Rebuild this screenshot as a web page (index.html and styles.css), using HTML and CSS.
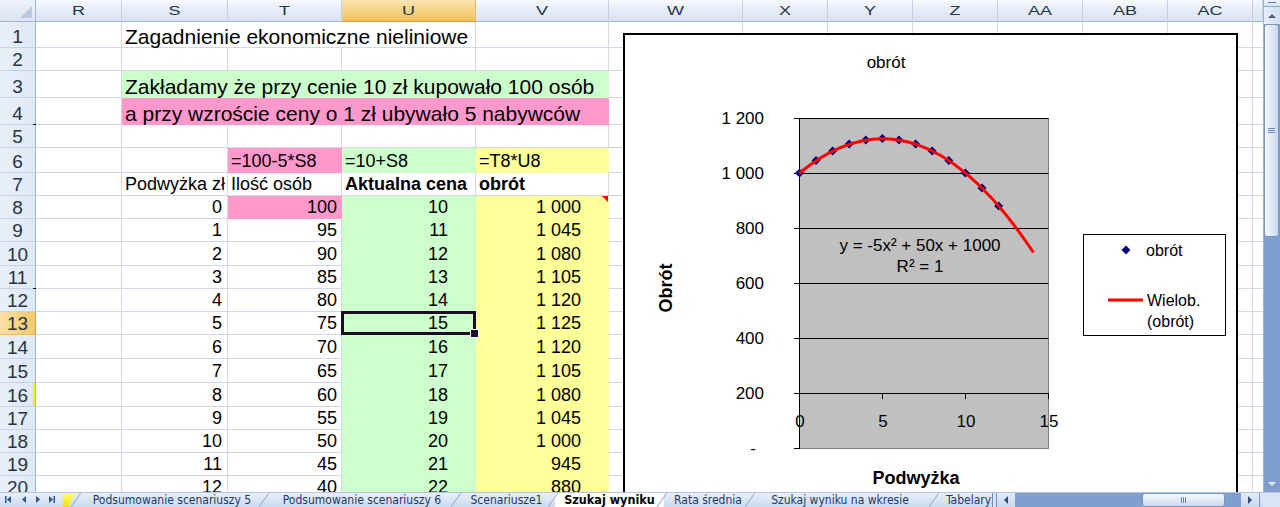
FILE: index.html
```html
<!DOCTYPE html>
<html lang="pl">
<head>
<meta charset="utf-8">
<title>Szukaj wyniku</title>
<link rel="stylesheet" href="styles.css">
</head>
<body>
<div class="app">
  <div class="main">
    <div class="sheet">
      <!-- column headers -->
      <div class="ch corner"></div>
      <div class="ch"><span>R</span></div>
      <div class="ch"><span>S</span></div>
      <div class="ch"><span>T</span></div>
      <div class="ch sel"><span>U</span></div>
      <div class="ch"><span>V</span></div>
      <div class="ch"><span>W</span></div>
      <div class="ch"><span>X</span></div>
      <div class="ch"><span>Y</span></div>
      <div class="ch"><span>Z</span></div>
      <div class="ch"><span>AA</span></div>
      <div class="ch"><span>AB</span></div>
      <div class="ch"><span>AC</span></div>
      <div class="ch"></div>

      <!-- row 1 -->
      <div class="rh">1</div><div class="c"></div>
      <div class="c big span3">Zagadnienie ekonomiczne nieliniowe</div>
      <div class="c"></div><div class="rest"></div>
      <!-- row 2 -->
      <div class="rh">2</div><div class="c"></div><div class="c"></div><div class="c"></div><div class="c"></div><div class="c"></div><div class="rest"></div>
      <!-- row 3 -->
      <div class="rh">3</div><div class="c"></div>
      <div class="c big span4 green">Zakładamy że przy cenie 10 zł kupowało 100 osób</div>
      <div class="rest"></div>
      <!-- row 4 -->
      <div class="rh mark-b">4</div><div class="c"></div>
      <div class="c big span4 pink">a przy wzroście ceny o 1 zł ubywało 5 nabywców</div>
      <div class="rest"></div>
      <!-- row 5 -->
      <div class="rh">5</div><div class="c"></div><div class="c"></div><div class="c"></div><div class="c"></div><div class="c"></div><div class="rest"></div>
      <!-- row 6 -->
      <div class="rh">6</div><div class="c"></div><div class="c"></div>
      <div class="c pink">=100-5*S8</div>
      <div class="c green">=10+S8</div>
      <div class="c yellow">=T8*U8</div>
      <div class="rest"></div>
      <!-- row 7 -->
      <div class="rh">7</div><div class="c"></div>
      <div class="c">Podwyżka zł</div>
      <div class="c">Ilość osób</div>
      <div class="c bold">Aktualna cena</div>
      <div class="c bold">obrót</div>
      <div class="rest"></div>
      <!-- row 8 -->
      <div class="rh">8</div><div class="c"></div>
      <div class="c ns">0</div><div class="c nt pink">100</div><div class="c nu green">10</div><div class="c nv yellow comment">1 000</div>
      <div class="rest"></div>
      <!-- row 9 -->
      <div class="rh">9</div><div class="c"></div>
      <div class="c ns">1</div><div class="c nt">95</div><div class="c nu green">11</div><div class="c nv yellow">1 045</div>
      <div class="rest"></div>
      <!-- row 10 -->
      <div class="rh">10</div><div class="c"></div>
      <div class="c ns">2</div><div class="c nt">90</div><div class="c nu green">12</div><div class="c nv yellow">1 080</div>
      <div class="rest"></div>
      <!-- row 11 -->
      <div class="rh mark-b">11</div><div class="c"></div>
      <div class="c ns">3</div><div class="c nt">85</div><div class="c nu green">13</div><div class="c nv yellow">1 105</div>
      <div class="rest"></div>
      <!-- row 12 -->
      <div class="rh">12</div><div class="c"></div>
      <div class="c ns">4</div><div class="c nt">80</div><div class="c nu green">14</div><div class="c nv yellow">1 120</div>
      <div class="rest"></div>
      <!-- row 13 -->
      <div class="rh sel">13</div><div class="c"></div>
      <div class="c ns">5</div><div class="c nt">75</div><div class="c nu green selected">15</div><div class="c nv yellow">1 125</div>
      <div class="rest"></div>
      <!-- row 14 -->
      <div class="rh">14</div><div class="c"></div>
      <div class="c ns">6</div><div class="c nt">70</div><div class="c nu green">16</div><div class="c nv yellow">1 120</div>
      <div class="rest"></div>
      <!-- row 15 -->
      <div class="rh">15</div><div class="c"></div>
      <div class="c ns">7</div><div class="c nt">65</div><div class="c nu green">17</div><div class="c nv yellow">1 105</div>
      <div class="rest"></div>
      <!-- row 16 -->
      <div class="rh mark-y">16</div><div class="c"></div>
      <div class="c ns">8</div><div class="c nt">60</div><div class="c nu green">18</div><div class="c nv yellow">1 080</div>
      <div class="rest"></div>
      <!-- row 17 -->
      <div class="rh">17</div><div class="c"></div>
      <div class="c ns">9</div><div class="c nt">55</div><div class="c nu green">19</div><div class="c nv yellow">1 045</div>
      <div class="rest"></div>
      <!-- row 18 -->
      <div class="rh">18</div><div class="c"></div>
      <div class="c ns">10</div><div class="c nt">50</div><div class="c nu green">20</div><div class="c nv yellow">1 000</div>
      <div class="rest"></div>
      <!-- row 19 -->
      <div class="rh">19</div><div class="c"></div>
      <div class="c ns">11</div><div class="c nt">45</div><div class="c nu green">21</div><div class="c nv yellow">945</div>
      <div class="rest"></div>
      <!-- row 20 -->
      <div class="rh">20</div><div class="c"></div>
      <div class="c ns">12</div><div class="c nt">40</div><div class="c nu green">22</div><div class="c nv yellow">880</div>
      <div class="rest"></div>

      <!-- embedded chart object -->
      <div class="chart">
        <svg width="611" height="470" viewBox="0 0 611 470" class="chart-svg">
          <defs>
            <path id="dia" d="M0 -4.5L4.5 0L0 4.5L-4.5 0Z" fill="#000080"/>
          </defs>
          <text x="261" y="33" class="t-title" text-anchor="middle">obrót</text>
          <rect x="174.5" y="83.5" width="249" height="330" fill="#c0c0c0" stroke="#808080"/>
          <path d="M169 83.5H423.5M169 138.5H423.5M169 193.5H423.5M169 248.5H423.5M169 303.5H423.5M169 358.5H423.5M169 413.5H174.5" stroke="#000" fill="none"/>
          <path d="M174.5 83V414M257.5 358V364M340.5 358V364M423.5 358V364" stroke="#000" fill="none"/>
          <g class="t-axis" text-anchor="end">
            <text x="139" y="89">1 200</text>
            <text x="139" y="144">1 000</text>
            <text x="139" y="199">800</text>
            <text x="139" y="254">600</text>
            <text x="139" y="309">400</text>
            <text x="139" y="364">200</text>
            <text x="131" y="419">-</text>
          </g>
          <g class="t-axis" text-anchor="middle">
            <text x="175" y="392">0</text>
            <text x="258" y="392">5</text>
            <text x="341" y="392">10</text>
            <text x="424" y="392">15</text>
          </g>
          <g>
            <use href="#dia" x="174.5" y="138"/>
            <use href="#dia" x="191" y="125.6"/>
            <use href="#dia" x="207.6" y="116"/>
            <use href="#dia" x="224.2" y="109.1"/>
            <use href="#dia" x="240.8" y="105"/>
            <use href="#dia" x="257.4" y="103.6"/>
            <use href="#dia" x="274" y="105"/>
            <use href="#dia" x="290.6" y="109.1"/>
            <use href="#dia" x="307.2" y="116"/>
            <use href="#dia" x="323.8" y="125.6"/>
            <use href="#dia" x="340.4" y="138"/>
            <use href="#dia" x="357" y="153.1"/>
            <use href="#dia" x="373.6" y="171"/>
          </g>
          <path d="M174.5 138Q291.5 41.1 408.5 217.5" stroke="#ff0000" stroke-width="3" fill="none"/>
          <text x="295" y="216" class="t-axis" text-anchor="middle">y = -5x² + 50x + 1000</text>
          <text x="295" y="237" class="t-axis" text-anchor="middle">R² = 1</text>
          <text transform="translate(47 253) rotate(-90)" class="t-bold" text-anchor="middle">Obrót</text>
          <text x="291" y="449" class="t-bold" text-anchor="middle">Podwyżka</text>
          <rect x="458.5" y="199.5" width="142" height="101" fill="#fff" stroke="#000"/>
          <use href="#dia" x="501" y="215"/>
          <text x="521" y="221" class="t-leg">obrót</text>
          <path d="M483 265H518" stroke="#ff0000" stroke-width="3"/>
          <text x="522" y="271" class="t-leg">Wielob.</text>
          <text x="522" y="292" class="t-leg">(obrót)</text>
        </svg>
      </div>
    </div>

    <div class="vscroll">
      <div class="vs-split"></div>
      <div class="vs-btn"><i class="arr-up"></i></div>
      <div class="vs-thumb"><i class="grip-h"></i></div>
      <div class="vs-track"></div>
      <div class="vs-btn dark"><i class="arr-down"></i></div>
    </div>
  </div>

  <div class="tabs">
    <div class="nav">
      <svg width="60" height="15" viewBox="0 0 60 15">
        <g fill="#2b5597">
          <rect x="5" y="4" width="1.5" height="7"/>
          <path d="M11 4L7 7.5L11 11Z"/>
          <path d="M26 4L22 7.5L26 11Z"/>
          <path d="M36 4L40 7.5L36 11Z"/>
          <path d="M49 4L53 7.5L49 11Z"/>
          <rect x="53.5" y="4" width="1.5" height="7"/>
        </g>
      </svg>
    </div>
    <div class="tab yel"></div>
    <div class="tab w188">Podsumowanie scenariuszy 5</div>
    <div class="tab w192">Podsumowanie scenariuszy 6</div>
    <div class="tab w97">Scenariusze1</div>
    <div class="tab active">Szukaj wyniku</div>
    <div class="tab w88">Rata średnia</div>
    <div class="tab w176">Szukaj wyniku na wkresie</div>
    <div class="tab w64 cut">Tabelaryzacja</div>
    <div class="hscroll">
      <div class="hs-split"></div>
      <div class="hs-btn"><i class="arr-left"></i></div>
      <div class="hs-track"></div>
      <div class="hs-thumb"><i class="grip-v"></i></div>
      <div class="hs-track2"></div>
      <div class="hs-btn"><i class="arr-right"></i></div>
      <div class="hs-end"></div>
    </div>
    <div class="corner-box"></div>
  </div>
</div>
</body>
</html>
```

FILE: styles.css
```css
* { box-sizing: border-box; }

html, body {
  margin: 0;
  padding: 0;
  background: #fff;
  overflow: hidden;
}

body {
  font-family: "Liberation Sans", Arial, sans-serif;
  color: #000;
}

.app {
  width: 1280px;
  height: 507px;
  display: flex;
  flex-direction: column;
  overflow: hidden;
}

.main {
  display: flex;
  height: 492px;
  flex: none;
  overflow: hidden;
}

/* ---------- sheet grid ---------- */
.sheet {
  position: relative;
  width: 1263px;
  height: 492px;
  overflow: hidden;
  display: grid;
  grid-template-columns: 36px 86px 106px 114px 134px 133px 134px repeat(6, 85px) 10px;
  grid-template-rows: 22px 26px 23px 27px 27px 23px 25px 23px 23px 23px 24px 23px 23px 23px 24px 24px 24px 23px 23px 23px 23px;
}

.ch {
  background: linear-gradient(#f8fafd 0%, #e6edf7 45%, #d9e3f1 100%);
  border-right: 1px solid #c3d1e4;
  border-bottom: 1px solid #9eb6ce;
  display: flex;
  align-items: center;
  justify-content: center;
  font-size: 18px;
  color: #233447;
}
.ch span {
  display: inline-block;
  transform: scaleY(0.74);
}
.ch.sel {
  background: linear-gradient(#fbe2ad 0%, #f8d58a 45%, #f1c15f 100%);
  border-bottom-color: #f29536;
  border-right-color: #f2b75b;
}
.ch.corner {
  position: relative;
  background: linear-gradient(#eef3fa, #dbe4f1);
  border-right-color: #9eb6ce;
}
.ch.corner::after {
  content: "";
  position: absolute;
  right: 3px;
  bottom: 3px;
  border-left: 12px solid transparent;
  border-bottom: 12px solid #b9c9de;
}

.rh {
  background: linear-gradient(to right, #eaf0f9, #dfe8f5);
  border-right: 1px solid #9eb6ce;
  border-bottom: 1px solid #c5d3e6;
  display: flex;
  align-items: flex-end;
  justify-content: center;
  font-size: 19px;
  line-height: 1;
  padding-bottom: 1px;
  color: #233447;
}
.rh.sel {
  background: linear-gradient(to right, #fbe0a6, #f4c868);
  border-right-color: #f29536;
  border-bottom-color: #f2b75b;
}
.rh.mark-y { box-shadow: inset -2px 0 0 #f5f000; }
.rh.mark-b { position: relative; }
.rh.mark-b::after {
  content: "";
  position: absolute;
  right: -1px;
  bottom: -1px;
  width: 3px;
  height: 1px;
  background: #000;
}

.c {
  border-right: 1px solid #d0d7e5;
  border-bottom: 1px solid #d0d7e5;
  display: flex;
  align-items: flex-end;
  font-size: 18px;
  line-height: 1.15;
  padding: 0 3px 0 3px;
  white-space: nowrap;
  min-width: 0;
}

.rest {
  grid-column: span 8;
  border-bottom: 1px solid #d0d7e5;
  background-image: repeating-linear-gradient(to right, transparent 0 84px, #d0d7e5 84px 85px);
  background-size: 595px 100%;
  background-repeat: no-repeat;
  background-position: 49px 0;
}

.big { font-size: 21px; line-height: 0.9; }
.span3 { grid-column: span 3; }
.span4 { grid-column: span 4; }
.bold { font-weight: bold; }

.green { background: #ccffcc; border-color: #ccffcc; }
.pink { background: #ff99cc; border-color: #ff99cc; }
.yellow { background: #ffff99; border-color: #ffff99; }

.ns { justify-content: flex-end; padding-right: 5px; }
.nt { justify-content: flex-end; padding-right: 4px; }
.nu { justify-content: flex-end; padding-right: 27px; }
.nv { justify-content: flex-end; padding-right: 27px; }

.comment { position: relative; }
.comment::after {
  content: "";
  position: absolute;
  top: 0;
  right: 0;
  border-top: 6px solid #ff0000;
  border-left: 6px solid transparent;
}

.selected {
  position: relative;
  z-index: 1;
}
.selected::before {
  content: "";
  position: absolute;
  left: -1px;
  top: -1px;
  right: -1px;
  bottom: -1px;
  border: 3px solid #1f0a26;
}
.selected::after {
  content: "";
  position: absolute;
  right: -4px;
  bottom: -4px;
  width: 7px;
  height: 7px;
  background: #1f0a26;
  border: 1px solid #fff;
}

/* ---------- chart ---------- */
.chart {
  position: absolute;
  left: 623px;
  top: 33px;
  width: 615px;
  height: 474px;
  border: 2px solid #000;
  background: #fff;
  z-index: 2;
}
.chart-svg {
  display: block;
  font-family: "Liberation Sans", Arial, sans-serif;
}
.t-title { font-size: 17px; }
.t-axis { font-size: 17px; }
.t-bold { font-size: 18px; font-weight: bold; }
.t-leg { font-size: 16px; }

/* ---------- vertical scrollbar ---------- */
.vscroll {
  width: 17px;
  height: 492px;
  display: flex;
  flex-direction: column;
  background: #819fce;
  border-left: 1px solid #9eb6ce;
}
.vs-split {
  height: 7px;
  flex: none;
  background: linear-gradient(#eef3fa, #d6e2f2);
  border-bottom: 1px solid #8ba3c7;
  position: relative;
}
.vs-split::after {
  content: "";
  position: absolute;
  left: 4px;
  right: 4px;
  top: 2px;
  height: 1px;
  background: #5e7aa6;
}
.vs-btn {
  height: 17px;
  flex: none;
  display: flex;
  align-items: center;
  justify-content: center;
  background: linear-gradient(to right, #eaf0f8, #d3dff0);
}
.vs-btn.dark { background: #819fce; }
.vs-thumb {
  height: 213px;
  flex: none;
  margin: 0 1px 0 0;
  border: 1px solid #7b96c0;
  border-radius: 3px;
  background: linear-gradient(to right, #f6f9fd, #e1e9f6 50%, #c9d7ed);
  display: flex;
  align-items: center;
  justify-content: center;
}
.vs-track { flex: 1; }

.arr-up {
  width: 0; height: 0;
  border-left: 4px solid transparent;
  border-right: 4px solid transparent;
  border-bottom: 4px solid #4a5f80;
}
.arr-down {
  width: 0; height: 0;
  border-left: 4px solid transparent;
  border-right: 4px solid transparent;
  border-top: 4px solid #dfe8f5;
}
.arr-left {
  width: 0; height: 0;
  border-top: 4px solid transparent;
  border-bottom: 4px solid transparent;
  border-right: 4px solid #2f4f80;
}
.arr-right {
  width: 0; height: 0;
  border-top: 4px solid transparent;
  border-bottom: 4px solid transparent;
  border-left: 4px solid #2f4f80;
}
.grip-h {
  width: 7px;
  height: 5px;
  border-top: 1px solid #6d88b4;
  border-bottom: 1px solid #6d88b4;
  position: relative;
}
.grip-h::after {
  content: "";
  position: absolute;
  left: 0; right: 0; top: 1px;
  height: 1px;
  background: #6d88b4;
}
.grip-v {
  width: 5px;
  height: 6px;
  border-left: 1px solid #6d88b4;
  border-right: 1px solid #6d88b4;
  position: relative;
}
.grip-v::after {
  content: "";
  position: absolute;
  top: 0; bottom: 0; left: 1px;
  width: 1px;
  background: #6d88b4;
}

/* ---------- sheet tabs ---------- */
.tabs {
  height: 15px;
  flex: none;
  display: flex;
  background: linear-gradient(#e8eff9, #ccdbef);
  border-top: 1px solid #b5c7df;
  font-family: "DejaVu Sans Condensed", "DejaVu Sans", sans-serif;
  font-stretch: condensed;
  font-size: 12px;
  letter-spacing: 0;
  line-height: 14px;
  color: #1b3a66;
}
.nav {
  width: 60px;
  flex: none;
}
.nav svg { display: block; margin-top: -1px; }

.tab {
  position: relative;
  flex: none;
  text-align: center;
  white-space: nowrap;
  overflow: visible;
}
.tab::before {
  content: "";
  position: absolute;
  left: -3px;
  top: -2px;
  width: 1px;
  height: 19px;
  background: #9ab0d0;
  transform: rotate(35deg);
}
.tab.yel {
  width: 18px;
  background: linear-gradient(#fffc7a, #f2e400);
  clip-path: polygon(15% 0, 85% 0, 45% 100%, 15% 100%);
}
.tab.yel::before { display: none; }
.w188 { width: 188px; }
.w192 { width: 192px; }
.w97 { width: 97px; }
.w88 { width: 88px; }
.w176 { width: 176px; }
.w64 { width: 64px; }
.tab.cut {
  text-align: left;
  padding-left: 18px;
  overflow: hidden;
}
.tab.cut::before { left: 5px; }
.tab.active {
  width: 109px;
  background: #fff;
  font-weight: bold;
  font-size: 12.5px;
  letter-spacing: 0;
  color: #000;
}

.hscroll {
  flex: 1;
  display: flex;
  background: #819fce;
  border-left: 1px solid #6d88b4;
}
.hs-split {
  width: 4px;
  background: linear-gradient(to right, #e6edf7, #c7d6ec);
  border-right: 1px solid #7b96c0;
}
.hs-btn {
  width: 18px;
  display: flex;
  align-items: center;
  justify-content: center;
  background: linear-gradient(#e3ebf7, #c9d8ee);
}
.hs-track { width: 127px; }
.hs-thumb {
  width: 83px;
  border: 1px solid #7b96c0;
  border-radius: 3px;
  background: linear-gradient(#f6f9fd, #e1e9f6 50%, #c9d7ed);
  display: flex;
  align-items: center;
  justify-content: center;
}
.hs-track2 { width: 16px; }
.hs-end {
  flex: 1;
  background: linear-gradient(#e3ebf7, #c9d8ee);
  border-left: 1px solid #7b96c0;
}
.corner-box {
  width: 17px;
  flex: none;
  background: #dbe6f4;
}
```
